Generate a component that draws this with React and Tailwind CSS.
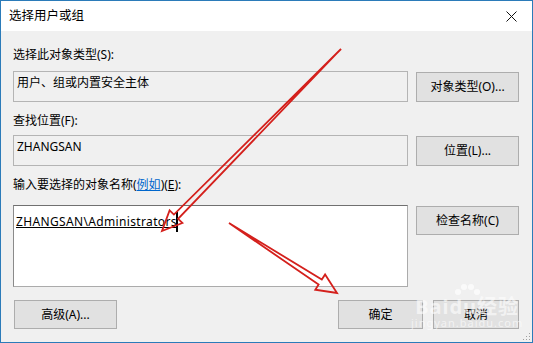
export default function App() {
  const btn =
    "flex items-center justify-center bg-[#e1e1e1] border border-[#adadad] leading-[16px]";
  return (
    <div className="relative w-[533px] h-[343px] border border-[#2b7bb9] bg-[#f0f0f0] font-['Noto_Sans','Noto_Sans_CJK_SC',sans-serif] text-[12px] text-black overflow-hidden flex flex-col">
      {/* Title bar */}
      <div className="h-[30px] bg-white flex items-center justify-between pl-[8px] pr-[15px] shrink-0">
        <span className="leading-[16px] text-[12.5px]">选择用户或组</span>
        <svg width="11" height="11" viewBox="0 0 11 11">
          <path d="M0.5 0.5 L10.5 10.5 M10.5 0.5 L0.5 10.5" stroke="#111" strokeWidth="1" fill="none" />
        </svg>
      </div>

      {/* Body */}
      <div className="flex-1 flex flex-col pl-[12px] pr-[13px] pt-[16px]">
        <div className="leading-[16px]">选择此对象类型(S):</div>
        <div className="mt-[8px] flex items-end gap-[8px]">
          <div className="w-[395px] h-[31px] border border-[#b4b4b4] bg-[#f0f0f0] pl-[3px] pt-[3px] leading-[16px]">
            用户、组或内置安全主体
          </div>
          <div className={btn + " w-[103px] h-[30px]"}>对象类型(O)...</div>
        </div>

        <div className="mt-[11px] leading-[16px]">查找位置(F):</div>
        <div className="mt-[6px] flex items-end gap-[8px]">
          <div className="w-[395px] h-[31px] border border-[#b4b4b4] bg-[#f0f0f0] pl-[3px] pt-[3px] leading-[16px]">
            ZHANGSAN
          </div>
          <div className={btn + " w-[103px] h-[30px]"}>位置(L)...</div>
        </div>

        <div className="mt-[11px] leading-[16px]">
          输入要选择的对象名称(<span className="text-[#0066cc] underline">例如</span>)(<span className="underline">E</span>):
        </div>
        <div className="mt-[12px] flex items-start gap-[8px]">
          <div className="relative w-[395px] h-[82px] border border-[#ababab] border-t-[#707070] border-l-[#8a8a8a] bg-white pl-[2px] pt-[8px] leading-[16px]">
            <span className="underline tracking-[0.35px]">ZHANGSAN\Administrators</span>
            <span className="absolute left-[162px] top-[6px] w-[2px] h-[20px] bg-black" />
          </div>
          <div className={btn + " mt-[1px] w-[103px] h-[29px]"}>检查名称(C)</div>
        </div>

        <div className="mt-[13px] flex items-center">
          <div className={btn + " ml-[1px] w-[103px] h-[29px]"}>高级(A)...</div>
          <div className="flex-1" />
          <div className={btn + " w-[85px] h-[29px]"}>确定</div>
          <div className={btn + " ml-[10px] w-[86px] h-[29px]"}>取消</div>
        </div>
      </div>

      {/* resize grip */}
      <svg className="absolute right-[1px] bottom-[1px]" width="8" height="8" viewBox="0 0 8 8">
        <rect x="6" y="0" width="1" height="1" fill="#a0a0a0" />
        <rect x="3" y="3" width="1" height="1" fill="#a0a0a0" />
        <rect x="6" y="3" width="1" height="1" fill="#a0a0a0" />
        <rect x="0" y="6" width="1" height="1" fill="#a0a0a0" />
        <rect x="3" y="6" width="1" height="1" fill="#a0a0a0" />
        <rect x="6" y="6" width="1" height="1" fill="#a0a0a0" />
      </svg>

      {/* Baidu watermark */}
      <div className="absolute left-[410px] top-[282px] pointer-events-none flex flex-col items-center text-white/60">
        <svg width="34" height="16" viewBox="0 0 34 16" className="opacity-70">
          <circle cx="8" cy="9" r="3" fill="#ffffff" />
          <circle cx="14" cy="4" r="3" fill="#ffffff" />
          <circle cx="21" cy="4" r="3" fill="#ffffff" />
          <circle cx="27" cy="9" r="3" fill="#ffffff" />
        </svg>
        <div className="text-[20px] leading-[20px] font-bold tracking-[1px] -mt-[2px]">Baidu经验</div>
        <div className="text-[11px] leading-[12px] tracking-[1px]">jingyan.baidu.com</div>
      </div>

      {/* Red annotation arrows */}
      <svg className="absolute left-0 top-0 pointer-events-none" width="533" height="343" viewBox="0 0 533 343">
        <polygon
          points="340,48 177.1,217.8 181.4,222 161,230 168.6,209.4 172.9,213.6"
          fill="none"
          stroke="#d4201c"
          strokeWidth="1.8"
          strokeLinejoin="miter"
        />
        <polygon
          points="228,222 317.6,283.6 314.3,288.7 336,292 324.1,273.5 320.8,278.6"
          fill="none"
          stroke="#d4201c"
          strokeWidth="1.8"
          strokeLinejoin="miter"
        />
      </svg>
    </div>
  );
}
